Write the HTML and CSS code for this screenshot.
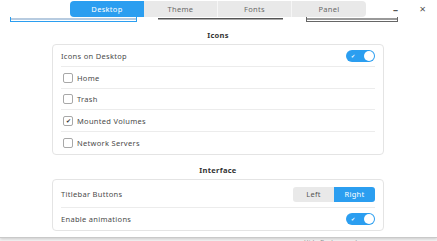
FILE: index.html
```html
<!doctype html>
<html lang="en">
<head>
  <meta charset="utf-8" />
  <title>Desktop Settings</title>
  <link rel="stylesheet" href="styles.css">
</head>
<body>
  <div class="window">
    <!-- tab bar -->
    <div class="topbar">
      <div class="tabs">
        <div class="tab active">Desktop</div>
        <div class="tab">Theme</div>
        <div class="tab">Fonts</div>
        <div class="tab last">Panel</div>
      </div>
      <div class="winctl">
        <span class="min">–</span>
        <span class="close">×</span>
      </div>
    </div>

    <!-- previews scrolled under the bar -->
    <div class="previews">
      <div class="pv pv1"></div>
      <div class="pv pv2"></div>
      <div class="pv pv3"></div>
    </div>

    <div class="content">
      <div class="section-title top">Icons</div>
      <div class="card">
        <div class="row">
          <span>Icons on Desktop</span>
          <span class="toggle on"><span class="tick">✔</span><span class="knob"></span></span>
        </div>
        <label class="row check"><span class="box"></span>Home</label>
        <label class="row check short"><span class="box"></span>Trash</label>
        <label class="row check"><span class="box checked">✔</span>Mounted Volumes</label>
        <label class="row check"><span class="box"></span>Network Servers</label>
      </div>

      <div class="section-title">Interface</div>
      <div class="card">
        <div class="row tall">
          <span>Titlebar Buttons</span>
          <span class="seg">
            <span class="seg-btn">Left</span>
            <span class="seg-btn sel">Right</span>
          </span>
        </div>
        <div class="row">
          <span>Enable animations</span>
          <span class="toggle on"><span class="tick">✔</span><span class="knob"></span></span>
        </div>
      </div>
    </div>
  </div>
  <div class="under">Hide Backgrounds</div>
</body>
</html>
```

FILE: styles.css
```css
*{ box-sizing:border-box }
body{
  margin:0;
  width:437px; height:241px;
  overflow:hidden;
  background:#f4f4f4;
  font-family:"Noto Sans", "Open Sans", sans-serif;
  font-size:7.5px;
  color:#4a4a4a;
  letter-spacing:.3px;
}

.window{
  background:#fff;
  height:238px;
  border-bottom:1px solid #c9c9c9;
  box-shadow:0 1px 3px rgba(0,0,0,.18);
  overflow:hidden;
}

.topbar{
  height:17px;
  display:flex;
  align-items:flex-start;
  padding-top:1px;
}
.tabs{
  display:flex;
  margin-left:70px;
}
.tab{
  width:74px; height:16px;
  display:grid; place-items:center;
  background:#e9e9e9;
  color:#6a6a6a;
  border-right:1px solid #f6f6f6;
}
.tab.active{
  background:#2b9ef0;
  color:#fff;
  border-radius:4px 0 0 4px;
  border-right:0;
}
.tab.last{ border-radius:0 4px 4px 0; border-right:0; }

.winctl{
  margin-left:auto;
  display:flex;
  gap:21px;
  padding:1px 11px 0 0;
  font-size:10px;
  color:#555;
  line-height:14px;
}
.winctl .min{ font-weight:700; }
.winctl .close{ font-size:11px; }

.previews{
  display:flex;
  gap:21px;
  padding-left:10px;
  height:6px;
  align-items:flex-start;
}
.pv{ height:5px; }
.pv1{
  width:127px;
  border:1.5px solid #2b9ef0;
  border-top:0;
  background:linear-gradient(#fff 0 1px, #b7cbe0 1px 3px, #fff 3px);
}
.pv2{
  width:125px;
  background:linear-gradient(#fff 0 1px, #555 1px 2px, #aaa 2px 3px, #fff 3px);
}
.pv3{
  width:92px;
  margin-left:2px;
  border:1px solid #666;
  border-top:0;
  background:linear-gradient(#fff 0 1px, #999 1px 3px, #fff 3px);
}

.content{
  padding:0 53px 0 52px;
}
.section-title{
  text-align:center;
  font-weight:700;
  color:#333;
  height:18px;
  line-height:18px;
  margin-top:6px;
}
.section-title.top{ margin-top:3px; }

.card{
  border:1px solid #e4e4e4;
  border-radius:4px;
  padding:0 8px;
}
.row{
  display:flex;
  align-items:center;
  justify-content:space-between;
  height:22px;
  border-bottom:1px solid #ececec;
}
.row:last-child{ border-bottom:0; }
.row.short{ height:21px; }
.row.tall{ height:28px; padding-top:1px; }

.row.check{
  justify-content:flex-start;
  gap:4px;
  padding-left:2px;
}
.box{
  width:10px; height:10px;
  border:1px solid #a8a8a8;
  border-radius:2px;
  display:grid; place-items:center;
  font-size:6px;
  line-height:1;
  color:#333;
  letter-spacing:0;
}

.toggle{
  width:29px; height:12px;
  border-radius:6px;
  background:#2b9ef0;
  display:flex;
  align-items:center;
  justify-content:space-between;
  padding:0 1px 0 5px;
}
.tick{ color:#fff; font-size:5px; letter-spacing:0; }
.knob{
  width:10px; height:10px;
  border-radius:50%;
  background:#fff;
}

.seg{
  display:flex;
  border-radius:3px;
  overflow:hidden;
}
.seg-btn{
  width:41px; height:15px;
  display:grid; place-items:center;
  background:#e9e9e9;
  color:#555;
}
.seg-btn.sel{ background:#2b9ef0; color:#fff; }

.under{
  margin-left:304px;
  font-size:6px;
  color:#888;
  line-height:8px;
}
```
